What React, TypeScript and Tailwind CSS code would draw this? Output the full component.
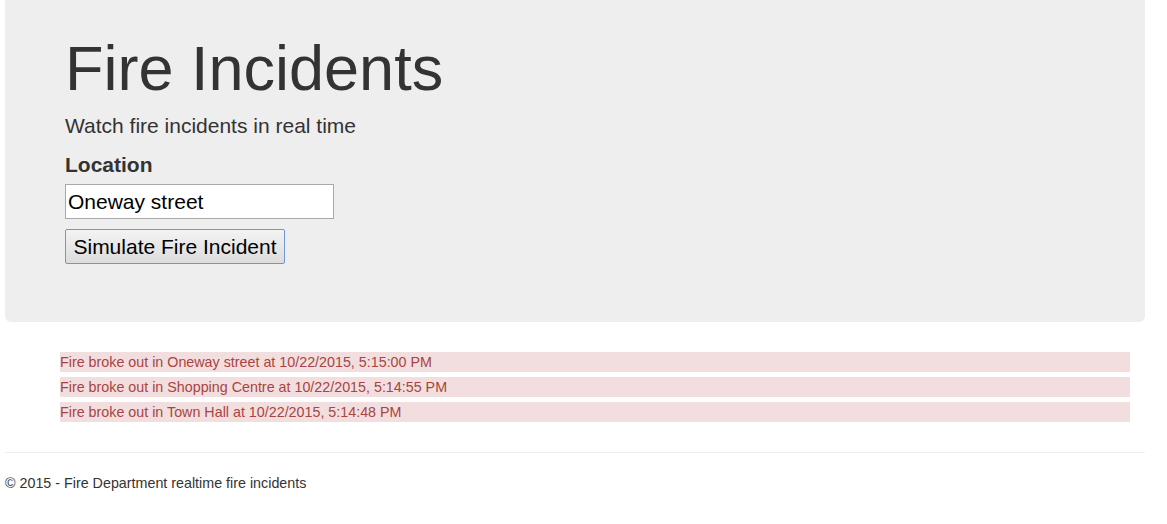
const incidents = [
  "Fire broke out in Oneway street at 10/22/2015, 5:15:00 PM",
  "Fire broke out in Shopping Centre at 10/22/2015, 5:14:55 PM",
  "Fire broke out in Town Hall at 10/22/2015, 5:14:48 PM",
];

export default function App() {
  return (
    <div className="min-h-[524px] bg-white font-['Liberation_Sans',Arial,sans-serif] text-[#333]">
      <div className="ml-[5px] w-[1140px]">
        {/* jumbotron */}
        <div className="rounded-b-[6px] bg-[#eeeeee] pl-[60px] pt-[34px] pb-[58px]">
          <h1 className="text-[63px] leading-[69px] font-normal text-[#333]">Fire Incidents</h1>
          <p className="mt-[8px] text-[21px] leading-[29px]">Watch fire incidents in real time</p>
          <label className="mt-[10px] block text-[21px] font-bold leading-[29px]">Location</label>
          <input
            defaultValue="Oneway street"
            className="mt-[5px] block h-[35px] w-[269px] border border-[#a9a9a9] bg-white px-[2px] text-[21px] text-black outline-none"
          />
          <button className="mt-[10px] block h-[35px] w-[220px] rounded-[2px] border border-[#6f96dd] bg-gradient-to-b from-[#f3f3f3] to-[#dcdcdc] text-[21px] text-black">
            Simulate Fire Incident
          </button>
        </div>

        {/* incident list */}
        <ul className="mt-[30px] ml-[55px] mr-[15px] flex flex-col gap-[5px]">
          {incidents.map((t) => (
            <li key={t} className="h-[20px] bg-[#f2dede] text-[14.3px] leading-[20px] text-[#a94442]">
              {t}
            </li>
          ))}
        </ul>

        <hr className="mt-[30px] border-t border-[#eeeeee]" />
        <footer className="mt-[20px] text-[14.3px] leading-[20px] text-[#333]">
          © 2015 - Fire Department realtime fire incidents
        </footer>
      </div>
    </div>
  );
}
